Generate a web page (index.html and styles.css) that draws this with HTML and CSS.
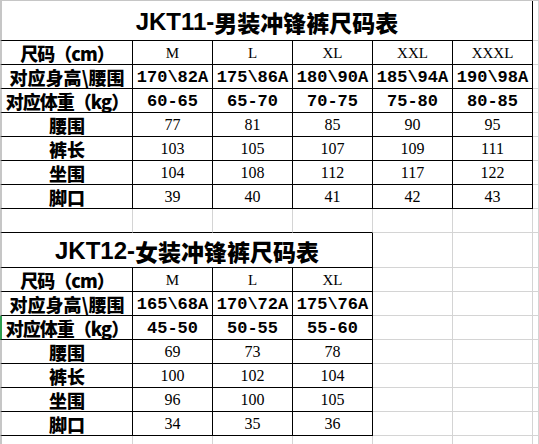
FILE: index.html
```html
<!DOCTYPE html>
<html lang="zh-CN">
<head>
    <meta charset="UTF-8">
    <meta name="viewport" content="width=device-width, initial-scale=1.0">
    <title>冲锋裤尺码表</title>
    <link rel="stylesheet" href="styles.css">
</head>
<body>
    <div class="sheet">
        <!-- JKT11 men's table -->
        <div class="c b first title span6"><span class="title-lat">JKT11-</span><span class="title-cjk">男装冲锋裤尺码表</span></div>
        <div class="c"></div>

        <div class="c b first lbl tight">尺码（cm）</div>
        <div class="c b size">M</div>
        <div class="c b size">L</div>
        <div class="c b size">XL</div>
        <div class="c b size">XXL</div>
        <div class="c b size">XXXL</div>
        <div class="c"></div>

        <div class="c b first lbl">对应身高\腰围</div>
        <div class="c b bnum">170\82A</div>
        <div class="c b bnum">175\86A</div>
        <div class="c b bnum">180\90A</div>
        <div class="c b bnum">185\94A</div>
        <div class="c b bnum">190\98A</div>
        <div class="c"></div>

        <div class="c b first lbl tight">对应体重（kg）</div>
        <div class="c b bnum">60-65</div>
        <div class="c b bnum">65-70</div>
        <div class="c b bnum">70-75</div>
        <div class="c b bnum">75-80</div>
        <div class="c b bnum">80-85</div>
        <div class="c"></div>

        <div class="c b first lbl">腰围</div>
        <div class="c b num">77</div>
        <div class="c b num">81</div>
        <div class="c b num">85</div>
        <div class="c b num">90</div>
        <div class="c b num">95</div>
        <div class="c"></div>

        <div class="c b first lbl">裤长</div>
        <div class="c b num">103</div>
        <div class="c b num">105</div>
        <div class="c b num">107</div>
        <div class="c b num">109</div>
        <div class="c b num">111</div>
        <div class="c"></div>

        <div class="c b first lbl">坐围</div>
        <div class="c b num">104</div>
        <div class="c b num">108</div>
        <div class="c b num">112</div>
        <div class="c b num">117</div>
        <div class="c b num">122</div>
        <div class="c"></div>

        <div class="c b first lbl">脚口</div>
        <div class="c b num">39</div>
        <div class="c b num">40</div>
        <div class="c b num">41</div>
        <div class="c b num">42</div>
        <div class="c b num">43</div>
        <div class="c"></div>

        <!-- empty row -->
        <div class="c first bt"></div>
        <div class="c bt"></div>
        <div class="c bt"></div>
        <div class="c bt"></div>
        <div class="c"></div>
        <div class="c"></div>
        <div class="c"></div>

        <!-- JKT12 women's table -->
        <div class="c b first title span4"><span class="title-lat">JKT12-</span><span class="title-cjk">女装冲锋裤尺码表</span></div>
        <div class="c"></div>
        <div class="c"></div>
        <div class="c"></div>

        <div class="c b first lbl tight">尺码（cm）</div>
        <div class="c b size">M</div>
        <div class="c b size">L</div>
        <div class="c b size">XL</div>
        <div class="c"></div>
        <div class="c"></div>
        <div class="c"></div>

        <div class="c b first lbl">对应身高\腰围</div>
        <div class="c b bnum">165\68A</div>
        <div class="c b bnum">170\72A</div>
        <div class="c b bnum">175\76A</div>
        <div class="c"></div>
        <div class="c"></div>
        <div class="c"></div>

        <div class="c b first active lbl tight">对应体重（kg）</div>
        <div class="c b bnum">45-50</div>
        <div class="c b bnum">50-55</div>
        <div class="c b bnum">55-60</div>
        <div class="c"></div>
        <div class="c"></div>
        <div class="c"></div>

        <div class="c b first lbl">腰围</div>
        <div class="c b num">69</div>
        <div class="c b num">73</div>
        <div class="c b num">78</div>
        <div class="c"></div>
        <div class="c"></div>
        <div class="c"></div>

        <div class="c b first lbl">裤长</div>
        <div class="c b num">100</div>
        <div class="c b num">102</div>
        <div class="c b num">104</div>
        <div class="c"></div>
        <div class="c"></div>
        <div class="c"></div>

        <div class="c b first lbl">坐围</div>
        <div class="c b num">96</div>
        <div class="c b num">100</div>
        <div class="c b num">105</div>
        <div class="c"></div>
        <div class="c"></div>
        <div class="c"></div>

        <div class="c b first lbl">脚口</div>
        <div class="c b num">34</div>
        <div class="c b num">35</div>
        <div class="c b num">36</div>
        <div class="c"></div>
        <div class="c"></div>
        <div class="c"></div>

        <!-- empty row -->
        <div class="c first"></div>
        <div class="c"></div>
        <div class="c"></div>
        <div class="c"></div>
        <div class="c"></div>
        <div class="c"></div>
        <div class="c"></div>
    </div>
</body>
</html>
```

FILE: styles.css
```css
body {
    margin: 0;
    background-color: white;
    overflow: hidden;
    color: #000;
}
.sheet {
    display: grid;
    grid-template-columns: 133px repeat(5, 80px) 1fr;
    grid-template-rows: 40px repeat(8, 24px) 35px repeat(8, 24px);
    border-top: 1px solid #c6c6c6;
    width: 539px;
}
.c {
    box-sizing: border-box;
    border-right: 1px solid #d4d4d4;
    border-bottom: 1px solid #d4d4d4;
    display: flex;
    justify-content: center;
    align-items: center;
    white-space: nowrap;
    overflow: hidden;
}
.c.b {
    border-right-color: #000;
    border-bottom-color: #000;
}
.c.bt {
    border-bottom-color: #000;
}
.c.first {
    border-left: 2px solid #c6c6c6;
}
.c.first.active {
    border-left-color: #2e9e4f;
}
.span6 {
    grid-column: span 6;
}
.span4 {
    grid-column: span 4;
}
.title {
    padding-top: 2px;
}
.title-lat {
    font-family: "Liberation Sans", Arial, sans-serif;
    font-weight: bold;
    font-size: 24px;
}
.title-cjk {
    font-family: "Noto Sans CJK SC", sans-serif;
    font-weight: 900;
    font-size: 23px;
}
.lbl {
    font-family: "Noto Sans CJK SC", sans-serif;
    font-weight: 900;
    font-size: 18px;
}
.lbl.tight {
    letter-spacing: -1px;
}
.size {
    font-family: "Liberation Serif", serif;
    font-size: 15px;
    padding-top: 2px;
}
.bnum {
    font-family: "Liberation Mono", monospace;
    font-weight: bold;
    font-size: 17px;
    padding-top: 1px;
}
.num {
    font-family: "Liberation Serif", "Noto Sans CJK SC", serif;
    font-size: 16px;
    padding-top: 1px;
}
```
